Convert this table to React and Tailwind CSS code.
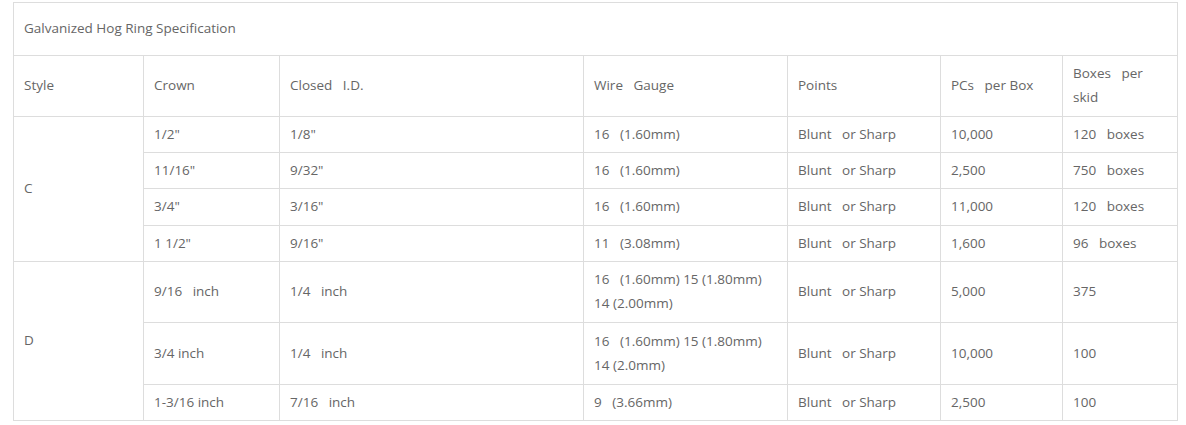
const rowsC = [
  ['1/2"', '1/8"', '16   (1.60mm)', '10,000', '120   boxes', 'h-[36px]'],
  ['11/16"', '9/32"', '16   (1.60mm)', '2,500', '750   boxes', 'h-[36px]'],
  ['3/4"', '3/16"', '16   (1.60mm)', '11,000', '120   boxes', 'h-[37px]'],
  ['1 1/2"', '9/16"', '11   (3.08mm)', '1,600', '96   boxes', 'h-[36px]'],
]

const rowsD = [
  ['9/16   inch', '1/4   inch', ['16   (1.60mm) 15 (1.80mm)', '14 (2.00mm)'], '5,000', '375', 'h-[61px]'],
  ['3/4 inch', '1/4   inch', ['16   (1.60mm) 15 (1.80mm)', '14 (2.0mm)'], '10,000', '100', 'h-[62px]'],
  ['1-3/16 inch', '7/16   inch', ['9   (3.66mm)'], '2,500', '100', 'h-[36px]'],
]

const td = 'border border-[#ddd] px-[10px] pt-0 pb-[2px] align-middle whitespace-pre-wrap'

export default function App() {
  return (
    <div className="pt-[2px] pl-[13px] bg-white min-h-[425px]" style={{ fontFamily: '"Open Sans", "Liberation Sans", sans-serif' }}>
      <table className="border-collapse table-fixed w-[1164px] text-[13.5px] leading-[24px] text-[#666]">
        <colgroup>
          <col className="w-[130px]" />
          <col className="w-[136px]" />
          <col className="w-[304px]" />
          <col className="w-[204px]" />
          <col className="w-[153px]" />
          <col className="w-[122px]" />
          <col className="w-[115px]" />
        </colgroup>
        <tbody>
          <tr className="h-[53px]">
            <td colSpan={7} className={td}>Galvanized Hog Ring Specification</td>
          </tr>
          <tr className="h-[61px]">
            <td className={td}>Style</td>
            <td className={td}>Crown</td>
            <td className={td}>Closed   I.D.</td>
            <td className={td}>Wire   Gauge</td>
            <td className={td}>Points</td>
            <td className={td}>PCs   per Box</td>
            <td className={td}>Boxes   per skid</td>
          </tr>
          {rowsC.map(([crown, id, gauge, pcs, boxes, h], i) => (
            <tr key={crown} className={h}>
              {i === 0 && <td rowSpan={4} className={td}>C</td>}
              <td className={td}>{crown}</td>
              <td className={td}>{id}</td>
              <td className={td}>{gauge}</td>
              <td className={td}>Blunt   or Sharp</td>
              <td className={td}>{pcs}</td>
              <td className={td}>{boxes}</td>
            </tr>
          ))}
          {rowsD.map(([crown, id, gauge, pcs, boxes, h], i) => (
            <tr key={crown} className={h}>
              {i === 0 && <td rowSpan={3} className={td}>D</td>}
              <td className={td}>{crown}</td>
              <td className={td}>{id}</td>
              <td className={td}>
                {gauge.map(line => <div key={line}>{line}</div>)}
              </td>
              <td className={td}>Blunt   or Sharp</td>
              <td className={td}>{pcs}</td>
              <td className={td}>{boxes}</td>
            </tr>
          ))}
        </tbody>
      </table>
    </div>
  )
}
